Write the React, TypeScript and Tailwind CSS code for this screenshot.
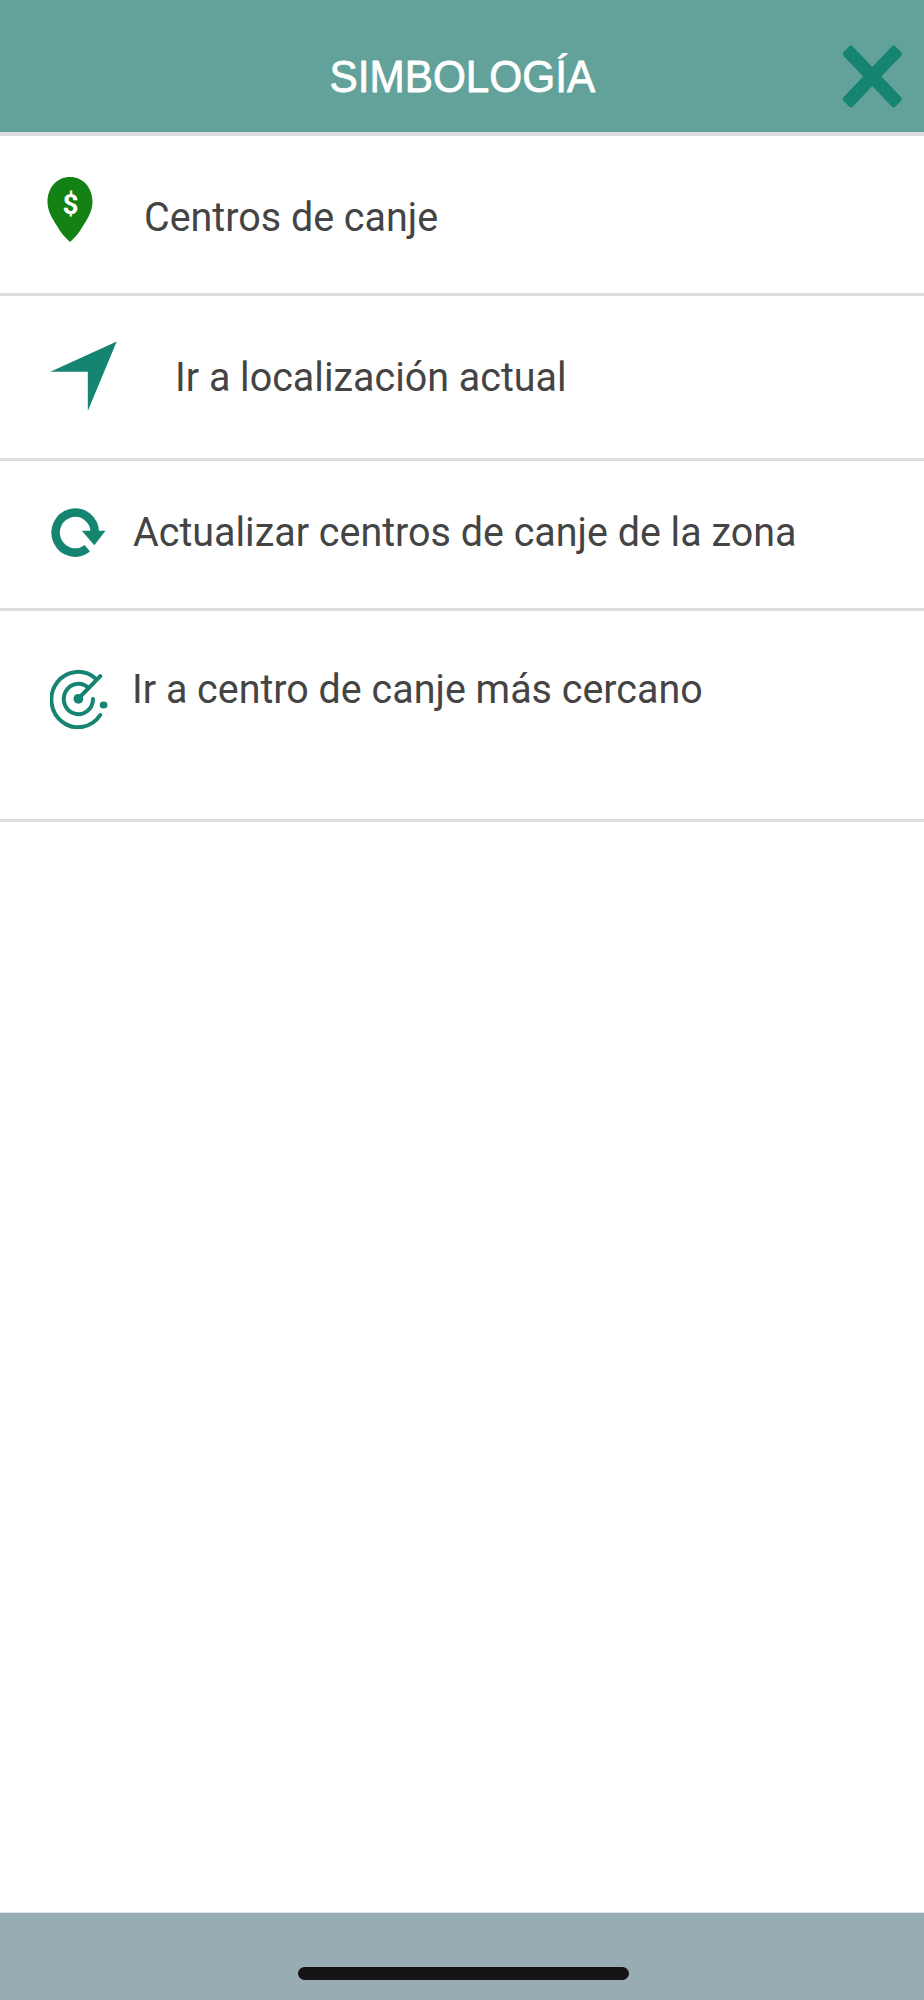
import React from "react";

const PinIcon = () => (
  <svg width="46" height="66" viewBox="0 0 46 66" className="mt-[41px] shrink-0">
    <path d="M23 0C10 0 .5 10.500 .5 25C.5 34 5.500 42 10 49C14 56 18.500 61 23 65C27.500 61 32 56 36 49C40.500 42 45.500 34 45.500 25C45.500 10.500 36 0 23 0Z" fill="#138113" />
    <text x="23.500" y="37" textAnchor="middle" fontFamily="Roboto, sans-serif" fontSize="28" fontWeight="700" fill="#fff">
      $
    </text>
  </svg>
);

const ArrowIcon = () => (
  <svg width="68" height="70" viewBox="0 0 68 70" className="mt-[45px] shrink-0">
    <path d="M.3 30.700L66.700 .5L37.800 70V30.700Z" fill="#158572" />
  </svg>
);

const RefreshIcon = () => (
  <svg width="56" height="50" viewBox="0 0 56 50" className="mt-[47px] shrink-0">
    <path d="M44.800 24.500A19.600 20 0 1 0 37.300 40.300" fill="none" stroke="#158572" strokeWidth="8.500" />
    <path d="M31.800 22.700H55.500L44.300 37.200Z" fill="#158572" />
  </svg>
);

const RadarIcon = () => (
  <svg width="60" height="60" viewBox="0 0 60 60" className="mt-[58px] shrink-0">
    <g fill="none" stroke="#158572" strokeWidth="4" strokeLinecap="round">
      <path d="M45.500 9.500A26.700 27.700 0 1 0 50.200 46" />
      <path d="M38.500 19A14.600 15.200 0 1 0 43 30" />
      <path d="M28.500 29.500L50.300 7.200" />
    </g>
    <circle cx="28.400" cy="29.800" r="4.900" fill="#158572" />
    <ellipse cx="53.600" cy="36" rx="3.900" ry="3.600" fill="#158572" />
  </svg>
);

const CloseIcon = () => (
  <svg width="61" height="63" viewBox="0 0 61 63">
    <g transform="translate(30.300 31.500) scale(1 1.050)" fill="#158572">
      <rect x="-36.700" y="-6.500" width="73.400" height="13" rx="3" transform="rotate(45)" />
      <rect x="-36.700" y="-6.500" width="73.400" height="13" rx="3" transform="rotate(-45)" />
    </g>
  </svg>
);

const items = [
  {
    label: "Centros de canje",
    icon: <PinIcon />,
    row: "h-[160px] pl-[47px]",
    text: "ml-[51px] mt-[57px]",
  },
  {
    label: "Ir a localización actual",
    icon: <ArrowIcon />,
    row: "h-[165px] pl-[50px]",
    text: "ml-[57px] mt-[57px]",
  },
  {
    label: "Actualizar centros de canje de la zona",
    icon: <RefreshIcon />,
    row: "h-[150px] pl-[50px]",
    text: "ml-[27px] mt-[47px]",
  },
  {
    label: "Ir a centro de canje más cercano",
    icon: <RadarIcon />,
    row: "h-[211px] pl-[50px]",
    text: "ml-[22px] mt-[54px]",
  },
];

export default function App() {
  return (
    <div className="flex h-[2000px] w-[924px] flex-col overflow-hidden bg-white">
      <header className="flex h-[136px] shrink-0 border-b-4 border-[#dcdcdc] bg-[#63a29a]">
        <div className="w-[121px]" />
        <h1 className="mt-[52px] flex-1 text-center font-['Liberation_Sans',Arial,sans-serif] text-[45px] leading-[50px] text-white">
          <span className="inline-block scale-x-[.94] [-webkit-text-stroke:0.8px_white]">SIMBOLOGÍA</span>
        </h1>
        <button aria-label="Cerrar" className="mt-[45px] mr-[21px] ml-[38px] h-[63px] w-[61px]">
          <CloseIcon />
        </button>
      </header>

      <ul>
        {items.map((item) => (
          <li key={item.label} className={`flex items-start border-b-[3px] border-[#dcdcdc] ${item.row}`}>
            {item.icon}
            <span className={`origin-left scale-x-[.962] font-[Roboto,sans-serif] text-[41px] leading-[48px] whitespace-nowrap text-[#444] ${item.text}`}>
              {item.label}
            </span>
          </li>
        ))}
      </ul>

      <footer className="mt-auto flex h-[88px] shrink-0 justify-center border-t border-[#dce3e5] bg-[#98adb3]">
        <div className="mt-[54px] ml-[3px] h-[13px] w-[331px] rounded-full bg-[#141414]" />
      </footer>
    </div>
  );
}
